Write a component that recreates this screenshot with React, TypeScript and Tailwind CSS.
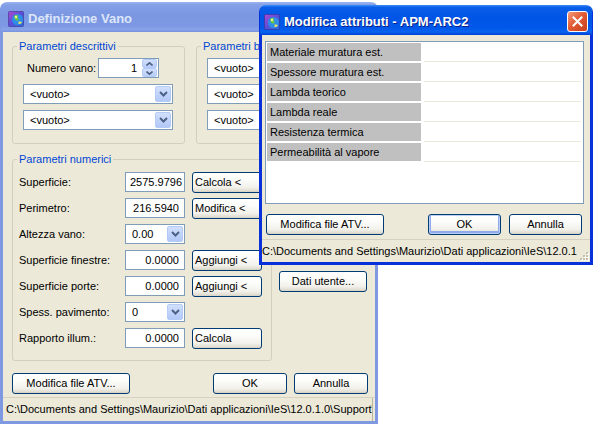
import React from "react";

const BTN =
  "flex items-center h-[21px] rounded-[3px] border border-[#003c74] bg-[linear-gradient(180deg,#ffffff_0%,#fcfcfa_35%,#f2f1eb_75%,#e2dfd4_92%,#d4cfc2_100%)] text-black whitespace-nowrap overflow-hidden";

function Btn({
  children,
  className = "",
  left = false,
  def = false,
}: {
  children: React.ReactNode;
  className?: string;
  left?: boolean;
  def?: boolean;
}) {
  return (
    <div
      className={`${BTN} ${left ? "justify-start pl-[2px]" : "justify-center"} ${
        def ? "shadow-[inset_0_0_0_1px_#bcd0f6,inset_0_-1px_0_2px_#8fa9ea]" : ""
      } ${className}`}
    >
      {children}
    </div>
  );
}

function Chevron({ up = false }: { up?: boolean }) {
  return (
    <svg width="9" height="6" viewBox="0 0 9 6">
      <path
        d={up ? "M1 5 L4.5 1.5 L8 5" : "M1 1 L4.5 4.5 L8 1"}
        stroke="#4d6185"
        strokeWidth="2"
        fill="none"
      />
    </svg>
  );
}

function SmallChevron({ up = false }: { up?: boolean }) {
  return (
    <svg width="7" height="4" viewBox="0 0 7 4">
      <path
        d={up ? "M0.5 3.5 L3.5 0.8 L6.5 3.5" : "M0.5 0.5 L3.5 3.2 L6.5 0.5"}
        stroke="#4d6185"
        strokeWidth="1.6"
        fill="none"
      />
    </svg>
  );
}

function DropBtn() {
  return (
    <div className="w-[16px] h-[16px] mr-[1px] rounded-[2px] border border-[#b5cbf7] bg-[linear-gradient(180deg,#d2e0fd_0%,#c1d3fb_50%,#b3c8f6_100%)] flex items-center justify-center">
      <Chevron />
    </div>
  );
}

function Combo({ text, className = "" }: { text: string; className?: string }) {
  return (
    <div
      className={`flex items-center h-[20px] border border-[#7f9db9] bg-white ${className}`}
    >
      <span className="flex-1 pl-[6px] whitespace-nowrap overflow-hidden">{text}</span>
      <DropBtn />
    </div>
  );
}

function Edit({
  text,
  className = "",
  leftAlign = false,
}: {
  text: string;
  className?: string;
  leftAlign?: boolean;
}) {
  return (
    <div
      className={`flex items-center h-[20px] border border-[#7f9db9] bg-white overflow-hidden whitespace-nowrap ${
        leftAlign ? "justify-start pl-[4px]" : "justify-end pr-[5px]"
      } ${className}`}
    >
      {text}
    </div>
  );
}

function AppIcon() {
  return (
    <svg width="16" height="16" viewBox="0 0 16 16">
      <defs>
        <linearGradient id="ig" x1="0" y1="0" x2="1" y2="1">
          <stop offset="0" stopColor="#b04ad0" />
          <stop offset="0.5" stopColor="#5a4fd8" />
          <stop offset="1" stopColor="#2a70e0" />
        </linearGradient>
      </defs>
      <rect x="0.5" y="0.5" width="15" height="15" rx="1" fill="url(#ig)" stroke="#3a2f90" strokeWidth="0.6" />
      <circle cx="9.5" cy="8.5" r="5.5" fill="#2f8fe8" />
      <path d="M6 5 Q8 3.5 10 4.5 Q9 7 11 8 Q10 10 8 9.5 Q6.5 8 6 5 Z" fill="#6cc840" />
      <path d="M10.5 10.5 Q13 10 14 11.5 Q12.5 13.5 10.5 13 Z" fill="#e8e060" />
      <circle cx="8" cy="6" r="1.2" fill="#f4f090" />
    </svg>
  );
}

function Grip() {
  return (
    <svg width="11" height="11" viewBox="0 0 11 11">
      {[
        [8, 0],
        [5, 3],
        [8, 3],
        [2, 6],
        [5, 6],
        [8, 6],
      ].map(([x, y], i) => (
        <g key={i}>
          <rect x={x + 1} y={y + 3} width="2" height="2" fill="#ffffff" />
          <rect x={x} y={y + 2} width="2" height="2" fill="#c5c2b2" />
        </g>
      ))}
    </svg>
  );
}

function Legend({ children }: { children: React.ReactNode }) {
  return (
    <legend className="ml-[4px] px-[2px] text-[#0046d5] leading-[13px]">{children}</legend>
  );
}

const numRows: {
  label: string;
  kind: "edit" | "combo";
  value: string;
  btn?: string;
  leftAlign?: boolean;
}[] = [
  { label: "Superficie:", kind: "edit", value: "2575.9796", btn: "Calcola <", leftAlign: true },
  { label: "Perimetro:", kind: "edit", value: "216.5940", btn: "Modifica <" },
  { label: "Altezza vano:", kind: "combo", value: "0.00" },
  { label: "Superficie finestre:", kind: "edit", value: "0.0000", btn: "Aggiungi <" },
  { label: "Superficie porte:", kind: "edit", value: "0.0000", btn: "Aggiungi <" },
  { label: "Spess. pavimento:", kind: "combo", value: "0" },
  { label: "Rapporto illum.:", kind: "edit", value: "0.0000", btn: "Calcola" },
];

const attrRows = [
  "Materiale muratura est.",
  "Spessore muratura est.",
  "Lambda teorico",
  "Lambda reale",
  "Resistenza termica",
  "Permeabilità al vapore",
];

function LeftWindow() {
  return (
    <div className="absolute left-0 top-[2px] w-[378px] h-[422px] flex flex-col rounded-t-[7px] overflow-hidden">
      <div className="h-[30px] shrink-0 flex items-center pt-[4px] pl-[7px] gap-[4px] bg-[linear-gradient(180deg,#9cb3ee_0%,#829fe7_10%,#7b97e2_45%,#7d99e3_80%,#88a3e8_92%,#7893de_100%)] border-x border-[#7e98e1]">
        <AppIcon />
        <span className="font-['Liberation_Sans',Arial,sans-serif] font-bold text-[13px] text-[#dce6f9]">
          Definizione Vano
        </span>
      </div>
      <div className="flex-1 flex flex-col bg-[#ece9d8] border-x-[3px] border-b-[3px] border-[#7e98e1]">
        <div className="pl-[9px] pt-[8px] flex flex-col">
          <div className="flex gap-[11px]">
            <fieldset className="w-[173px] h-[104px] border border-[#d0d0bf] rounded-[3px]">
              <Legend>Parametri descrittivi</Legend>
              <div className="flex flex-col gap-[6px] pt-[5px] px-[10px]">
                <div className="flex items-center h-[20px]">
                  <span className="w-[75px] pl-[4px]">Numero vano:</span>
                  <div className="w-[61px] h-[20px] border border-[#7f9db9] bg-white flex items-center">
                    <span className="flex-1 text-right pr-[5px]">1</span>
                    <div className="flex flex-col w-[15px] mr-[1px]">
                      <div className="h-[9px] rounded-[2px] border border-[#b5cbf7] bg-[linear-gradient(180deg,#d2e0fd,#b8cdf8)] flex items-center justify-center">
                        <SmallChevron up />
                      </div>
                      <div className="h-[9px] rounded-[2px] border border-[#b5cbf7] bg-[linear-gradient(180deg,#d2e0fd,#b8cdf8)] flex items-center justify-center">
                        <SmallChevron />
                      </div>
                    </div>
                  </div>
                </div>
                <Combo text="<vuoto>" className="w-[150px]" />
                <Combo text="<vuoto>" className="w-[150px]" />
              </div>
            </fieldset>
            <fieldset className="w-[172px] h-[104px] border border-[#d0d0bf] rounded-[3px]">
              <Legend>Parametri base</Legend>
              <div className="flex flex-col gap-[6px] pt-[5px] px-[10px]">
                <Combo text="<vuoto>" className="w-[150px]" />
                <Combo text="<vuoto>" className="w-[150px]" />
                <Combo text="<vuoto>" className="w-[150px]" />
              </div>
            </fieldset>
          </div>
          <div className="flex mt-[9px]">
            <fieldset className="w-[260px] h-[208px] border border-[#d0d0bf] rounded-[3px]">
              <Legend>Parametri numerici</Legend>
              <div className="flex flex-col gap-[6px] pt-[6px]">
                {numRows.map((r) => (
                  <div key={r.label} className="flex items-start h-[20px]">
                    <span className="w-[112px] pl-[6px] leading-[20px] whitespace-nowrap">
                      {r.label}
                    </span>
                    {r.kind === "edit" ? (
                      <Edit text={r.value} className="w-[60px]" leftAlign={r.leftAlign} />
                    ) : (
                      <Combo text={r.value} className="w-[60px]" />
                    )}
                    {r.btn && (
                      <Btn left className="ml-[7px] w-[70px]">
                        {r.btn}
                      </Btn>
                    )}
                  </div>
                ))}
              </div>
            </fieldset>
            <div className="ml-[7px] pt-[118px]">
              <Btn className="w-[88px]">Dati utente...</Btn>
            </div>
          </div>
          <div className="flex mt-[12px]">
            <Btn className="w-[118px]">Modifica file ATV...</Btn>
            <Btn className="ml-[83px] w-[74px]">OK</Btn>
            <Btn className="ml-[7px] w-[74px]">Annulla</Btn>
          </div>
        </div>
        <div className="mt-auto h-[24px] border-t border-[#d6d2c2] flex items-center overflow-hidden">
          <div className="w-[370px] h-full flex items-center border-r border-[#b8b4a4] pl-[3px] whitespace-nowrap overflow-hidden">
            C:\Documents and Settings\Maurizio\Dati applicazioni\IeS\12.0.1.0\Support\
          </div>
        </div>
      </div>
    </div>
  );
}

function RightWindow() {
  return (
    <div className="absolute left-[259px] top-[5px] w-[334px] h-[260px] flex flex-col rounded-t-[7px] overflow-hidden">
      <div className="h-[30px] shrink-0 flex items-center pt-[3px] pl-[4px] pr-[4px] gap-[4px] bg-[linear-gradient(180deg,#3d8cf5_0%,#0a5ee8_8%,#0055e6_40%,#0057e8_75%,#0a63f0_90%,#003fd2_100%)] border-x border-[#0831d9]">
        <AppIcon />
        <span className="font-['Liberation_Sans',Arial,sans-serif] font-bold text-[13px] text-white [text-shadow:1px_1px_0_#0a1f8a]">
          Modifica attributi - APM-ARC2
        </span>
        <div className="ml-auto w-[21px] h-[21px] rounded-[3px] border border-white bg-[linear-gradient(135deg,#f39b7e_0%,#e25c35_45%,#c8401c_100%)] flex items-center justify-center">
          <svg width="11" height="11" viewBox="0 0 11 11">
            <path d="M1.5 1.5 L9.5 9.5 M9.5 1.5 L1.5 9.5" stroke="#ffffff" strokeWidth="2" strokeLinecap="square" />
          </svg>
        </div>
      </div>
      <div className="flex-1 flex flex-col bg-[#ece9d8] border-x-[3px] border-b-[3px] border-[#0831d9]">
        <div className="pl-[3px] pt-[6px]">
          <div className="w-[319px] h-[163px] border border-[#7f9db9] bg-white p-[1px] flex flex-col">
            {attrRows.map((r) => (
              <div key={r} className="flex gap-[3px] h-[20px] shrink-0">
                <div className="w-[154px] h-[18px] bg-[#c0c0c0] pl-[3px] flex items-center whitespace-nowrap">
                  {r}
                </div>
                <div className="w-[157px] h-[19px] border-b border-[#ebe8dc]" />
              </div>
            ))}
          </div>
        </div>
        <div className="flex mt-[10px] pl-[4px]">
          <Btn className="w-[118px]">Modifica file ATV...</Btn>
          <Btn def className="ml-[44px] w-[73px]">OK</Btn>
          <Btn className="ml-[8px] w-[73px]">Annulla</Btn>
        </div>
        <div className="mt-auto h-[23px] border-t border-[#d6d2c2] flex items-center whitespace-nowrap overflow-hidden">
          <span className="flex-1 overflow-hidden">
            C:\Documents and Settings\Maurizio\Dati applicazioni\IeS\12.0.1
          </span>
          <div className="self-end mb-[1px] mr-[1px]">
            <Grip />
          </div>
        </div>
      </div>
    </div>
  );
}

export default function App() {
  return (
    <div className="relative w-[596px] h-[424px] bg-white overflow-hidden font-['Liberation_Sans',Arial,sans-serif] text-[11px] text-black">
      <LeftWindow />
      <RightWindow />
    </div>
  );
}
